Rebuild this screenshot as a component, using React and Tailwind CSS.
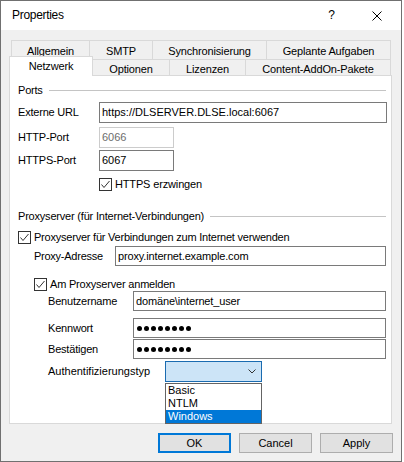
import React from "react";

const Check = () => (
  <div className="w-[13px] h-[13px] border border-[#333333] bg-white flex items-center justify-center shrink-0">
    <svg width="11" height="11" viewBox="0 0 11 11">
      <polyline points="1.5,5.5 4,8.5 9.5,2" fill="none" stroke="#333333" strokeWidth="1" />
    </svg>
  </div>
);

const Input = ({ w, h = "h-[20px]", children, disabled }) => (
  <div
    className={`${w} ${h} border ${disabled ? "border-[#cccccc] text-[#6d6d6d]" : "border-[#7a7a7a] text-black"} bg-white flex items-center pl-[2px] shrink-0 whitespace-nowrap overflow-hidden`}
  >
    {children}
  </div>
);

const Dots = () => (
  <div className="flex gap-[2px] pl-px">
    {[0, 1, 2, 3, 4, 5, 6, 7].map((i) => (
      <div key={i} className="w-[5px] h-[5px] rounded-full bg-black" />
    ))}
  </div>
);

const Header = ({ children }) => (
  <div className="flex items-center h-[13px] pl-[8px] pr-[5px]">
    <span className="whitespace-nowrap tracking-[-0.2px]">{children}</span>
    <div className="flex-1 h-px bg-[#c4c4c4] ml-[6px]" />
  </div>
);

export default function App() {
  return (
    <div className="w-[404px] h-[462px] bg-white font-['Liberation_Sans',Arial,sans-serif] text-[11px] leading-[13px] text-black">
      <div className="w-[402px] h-[462px] border border-[#707070] bg-[#f0f0f0] flex flex-col">
        {/* Title bar */}
        <div className="h-[29px] bg-white flex items-center pl-[11px] shrink-0">
          <span className="text-[12px] tracking-[-0.3px]">Properties</span>
          <span className="ml-auto text-[12px]">?</span>
          <svg className="ml-[37px] mr-[19px]" width="10" height="10" viewBox="0 0 10 10">
            <path d="M0.5 0.5 L9.5 9.5 M9.5 0.5 L0.5 9.5" stroke="#000" strokeWidth="1" />
          </svg>
        </div>

        {/* Tabs row 1 */}
        <div className="flex mt-[10px] ml-[10px] h-[19px] shrink-0 tracking-[-0.15px]">
          <div className="w-[78px] border-l border-t border-[#d9d9d9] flex items-center justify-center pt-[2px]">Allgemein</div>
          <div className="w-[63px] border-l border-t border-[#d9d9d9] flex items-center justify-center pt-[2px]">SMTP</div>
          <div className="w-[114px] border-l border-t border-[#d9d9d9] flex items-center justify-center pt-[2px]">Synchronisierung</div>
          <div className="w-[125px] border-l border-t border-r border-[#d9d9d9] flex items-center justify-center pt-[2px]">Geplante Aufgaben</div>
        </div>
        {/* Tabs row 2 */}
        <div className="flex ml-[8px] -mt-[3px] shrink-0 tracking-[-0.15px]">
          <div className="relative z-10 w-[84px] h-[20px] -mb-px bg-white border-l border-t border-r border-[#d9d9d9] flex items-center justify-center">Netzwerk</div>
          <div className="self-end w-[77px] h-[16px] border-t border-r border-[#d9d9d9] flex items-center justify-center pt-[3px]">Optionen</div>
          <div className="self-end w-[76px] h-[16px] border-t border-r border-[#d9d9d9] flex items-center justify-center pt-[3px]">Lizenzen</div>
          <div className="self-end w-[145px] h-[16px] border-t border-r border-[#d9d9d9] flex items-center justify-center pt-[3px]">Content-AddOn-Pakete</div>
        </div>

        {/* Panel */}
        <div className="ml-[8px] w-[383px] h-[349px] bg-white border border-[#d9d9d9] flex flex-col shrink-0">
          <div className="mt-[8px]">
            <Header>Ports</Header>
          </div>
          <div className="flex items-center mt-[5px] pl-[8px]">
            <span className="w-[81px] tracking-[-0.2px]">Externe URL</span>
            <Input w="w-[288px]" h="h-[21px]">https://DLSERVER.DLSE.local:6067</Input>
          </div>
          <div className="flex items-center mt-[4px] pl-[8px]">
            <span className="w-[81px] tracking-[-0.2px]">HTTP-Port</span>
            <Input w="w-[75px]" h="h-[21px]" disabled>6066</Input>
          </div>
          <div className="flex items-center mt-[2px] pl-[8px]">
            <span className="w-[81px] tracking-[-0.2px]">HTTPS-Port</span>
            <Input w="w-[75px]" h="h-[21px]">6067</Input>
          </div>
          <div className="flex items-center mt-[7px] pl-[89px] gap-[3px]">
            <Check />
            <span className="tracking-[-0.15px]">HTTPS erzwingen</span>
          </div>

          <div className="mt-[19px]">
            <Header>Proxyserver (für Internet-Verbindungen)</Header>
          </div>
          <div className="flex items-center mt-[8px] pl-[8px] gap-[3px]">
            <Check />
            <span className="tracking-[-0.22px]">Proxyserver für Verbindungen zum Internet verwenden</span>
          </div>
          <div className="flex items-center mt-[2px] pl-[24px]">
            <span className="w-[81px] tracking-[-0.25px]">Proxy-Adresse</span>
            <Input w="w-[271px]"><span className="tracking-[-0.15px]">proxy.internet.example.com</span></Input>
          </div>
          <div className="flex items-center mt-[12px] pl-[24px] gap-[3px]">
            <Check />
            <span className="tracking-[-0.2px]">Am Proxyserver anmelden</span>
          </div>
          <div className="flex items-center mt-0 pl-[38px]">
            <span className="w-[85px] tracking-[-0.2px]">Benutzername</span>
            <Input w="w-[253px]"><span className="tracking-[-0.15px]">domäne\internet_user</span></Input>
          </div>
          <div className="flex items-center mt-[7px] pl-[38px]">
            <span className="w-[85px] tracking-[-0.2px]">Kennwort</span>
            <Input w="w-[253px]"><Dots /></Input>
          </div>
          <div className="flex items-center mt-[1px] pl-[38px]">
            <span className="w-[85px] tracking-[-0.2px]">Bestätigen</span>
            <Input w="w-[253px]"><Dots /></Input>
          </div>
          <div className="flex items-center mt-[2px] pl-[38px]">
            <span className="w-[117px]">Authentifizierungstyp</span>
            <div className="relative w-[97px] h-[21px] shrink-0">
              <div className="w-full h-full bg-[#cce4f7] border border-[#1a6bb0] flex items-center justify-end pr-[5px]">
                <svg width="8" height="5" viewBox="0 0 8 5">
                  <polyline points="0.5,0.5 4,4 7.5,0.5" fill="none" stroke="#333" strokeWidth="1" />
                </svg>
              </div>
              <div className="absolute left-0 top-full mt-px w-full bg-white border border-[#646464] z-20 flex flex-col">
                <div className="h-[13px] pl-[2px] flex items-center">Basic</div>
                <div className="h-[13px] pl-[2px] flex items-center">NTLM</div>
                <div className="h-[13px] pl-[2px] flex items-center bg-[#0078d7] text-white">Windows</div>
              </div>
            </div>
          </div>
        </div>

        {/* Buttons */}
        <div className="flex justify-end gap-[8px] mt-[9px] pr-[8px] shrink-0">
          <div className="w-[73px] h-[20px] border-2 border-[#0078d7] bg-[#e1e1e1] flex items-center justify-center">OK</div>
          <div className="w-[73px] h-[20px] border border-[#adadad] bg-[#e1e1e1] flex items-center justify-center">Cancel</div>
          <div className="w-[73px] h-[20px] border border-[#adadad] bg-[#e1e1e1] flex items-center justify-center">Apply</div>
        </div>
      </div>
    </div>
  );
}
